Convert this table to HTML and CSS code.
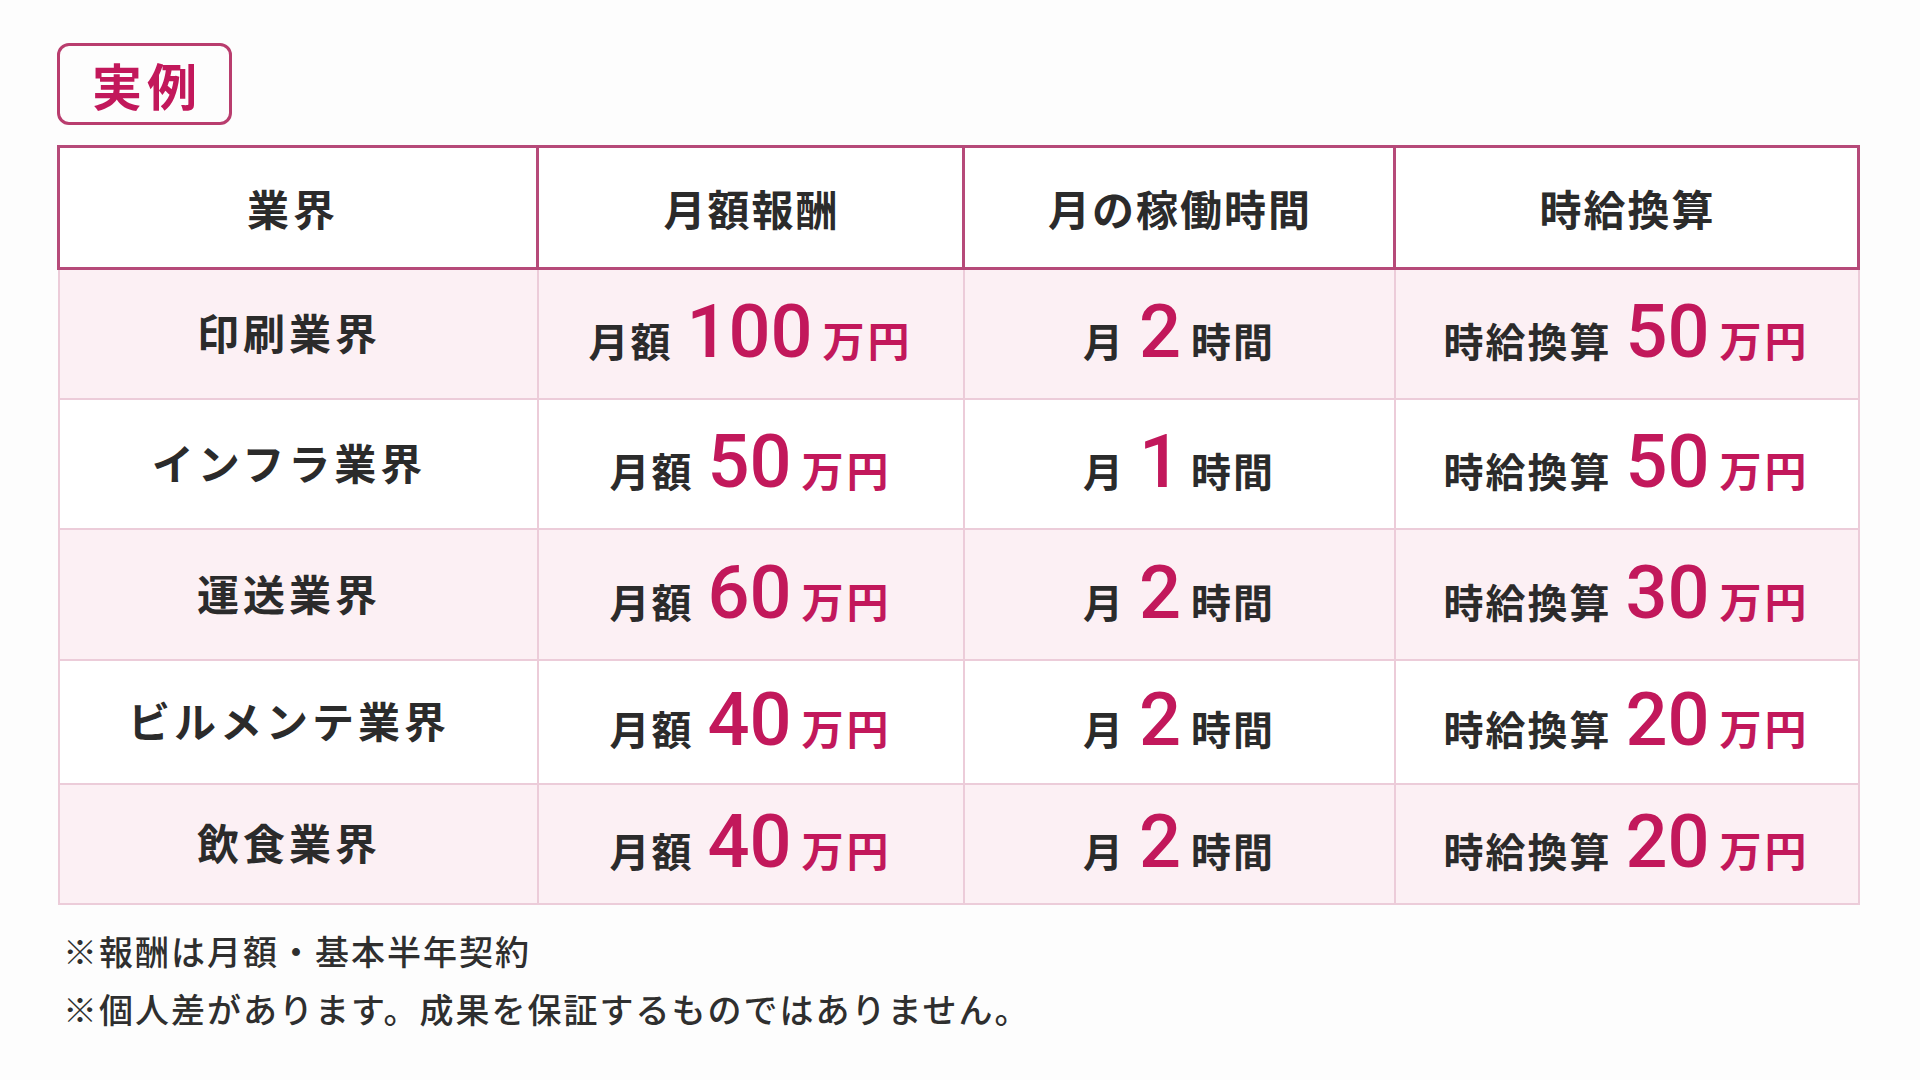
FILE: index.html
```html
<!DOCTYPE html>
<html lang="ja">
<head>
<meta charset="utf-8">
<title>実例</title>
<link rel="stylesheet" href="styles.css">
</head>
<body>
<div class="page">
  <div class="badge">実例</div>
  <table class="cases">
    <colgroup>
      <col class="c1"><col class="c2"><col class="c3"><col class="c4">
    </colgroup>
    <thead>
      <tr>
        <th class="ind">業界</th>
        <th>月額報酬</th>
        <th>月の稼働時間</th>
        <th>時給換算</th>
      </tr>
    </thead>
    <tbody>
      <tr class="pink">
        <td class="ind">印刷業界</td>
        <td><span class="lbl">月額</span><span class="num">100</span><span class="unit">万円</span></td>
        <td><span class="lbl">月</span><span class="num">2</span><span class="lbl">時間</span></td>
        <td><span class="lbl">時給換算</span><span class="num">50</span><span class="unit">万円</span></td>
      </tr>
      <tr>
        <td class="ind">インフラ業界</td>
        <td><span class="lbl">月額</span><span class="num">50</span><span class="unit">万円</span></td>
        <td><span class="lbl">月</span><span class="num">1</span><span class="lbl">時間</span></td>
        <td><span class="lbl">時給換算</span><span class="num">50</span><span class="unit">万円</span></td>
      </tr>
      <tr class="pink">
        <td class="ind">運送業界</td>
        <td><span class="lbl">月額</span><span class="num">60</span><span class="unit">万円</span></td>
        <td><span class="lbl">月</span><span class="num">2</span><span class="lbl">時間</span></td>
        <td><span class="lbl">時給換算</span><span class="num">30</span><span class="unit">万円</span></td>
      </tr>
      <tr>
        <td class="ind">ビルメンテ業界</td>
        <td><span class="lbl">月額</span><span class="num">40</span><span class="unit">万円</span></td>
        <td><span class="lbl">月</span><span class="num">2</span><span class="lbl">時間</span></td>
        <td><span class="lbl">時給換算</span><span class="num">20</span><span class="unit">万円</span></td>
      </tr>
      <tr class="pink">
        <td class="ind">飲食業界</td>
        <td><span class="lbl">月額</span><span class="num">40</span><span class="unit">万円</span></td>
        <td><span class="lbl">月</span><span class="num">2</span><span class="lbl">時間</span></td>
        <td><span class="lbl">時給換算</span><span class="num">20</span><span class="unit">万円</span></td>
      </tr>
    </tbody>
  </table>
  <div class="notes">
    <p>※報酬は月額・基本半年契約</p>
    <p>※個人差があります。成果を保証するものではありません。</p>
  </div>
</div>
</body>
</html>
```

FILE: styles.css
```css
html, body {
  margin: 0;
  padding: 0;
  background: #fdfdfd;
}

body {
  font-family: "Noto Sans CJK JP", "Noto Sans", sans-serif;
  color: #2b2b2b;
}

.page {
  width: 1920px;
  height: 1080px;
  box-sizing: border-box;
  padding: 43px 60px 0 57px;
  display: flex;
  flex-direction: column;
  align-items: flex-start;
}

.badge {
  box-sizing: border-box;
  width: 175px;
  height: 82px;
  border: 3px solid #b93d6e;
  border-radius: 12px;
  display: flex;
  align-items: center;
  justify-content: center;
  color: #c2185b;
  font-size: 50px;
  font-weight: 700;
  letter-spacing: 5px;
  text-indent: 5px;
  line-height: 1;
}

.cases {
  margin-top: 20px;
  width: 1800px;
  table-layout: fixed;
  border-collapse: collapse;
}

.c1 { width: 479px; }
.c2 { width: 426px; }
.c3 { width: 431px; }
.c4 { width: 464px; }

.cases th {
  height: 119px;
  border: 3px solid #b64a79;
  background: #ffffff;
  font-size: 42px;
  font-weight: 700;
  letter-spacing: 2px;
  text-indent: 2px;
  line-height: 1;
  text-align: center;
  vertical-align: middle;
  padding: 0;
}

.cases th.ind {
  letter-spacing: 4px;
  text-indent: 4px;
  padding-right: 14px;
}

.cases td {
  border: 2px solid #ecccd9;
  background: #ffffff;
  text-align: center;
  vertical-align: middle;
  padding: 0 0 4px;
  line-height: 1;
  white-space: nowrap;
}

.cases tr.pink td {
  background: #fcf0f4;
}

.cases tbody tr:nth-child(1) td { height: 124px; }
.cases tbody tr:nth-child(2) td { height: 124px; }
.cases tbody tr:nth-child(3) td { height: 125px; }
.cases tbody tr:nth-child(4) td { height: 118px; }
.cases tbody tr:nth-child(5) td { height: 114px; }

.cases td.ind {
  font-size: 42px;
  font-weight: 700;
  letter-spacing: 4px;
  text-indent: 4px;
  padding-right: 22px;
}

.lbl {
  font-size: 40px;
  font-weight: 700;
  letter-spacing: 2px;
}

.num {
  font-family: Roboto, "Noto Sans", sans-serif;
  font-size: 74px;
  font-weight: 500;
  color: #c2185b;
  margin: 0 10px 0 14px;
  letter-spacing: 0;
}

.unit {
  font-size: 42px;
  font-weight: 700;
  color: #c2185b;
  letter-spacing: 3px;
}

.notes {
  margin-top: 17px;
  padding-left: 6px;
}

.notes p {
  margin: 0;
  font-size: 34px;
  font-weight: 500;
  line-height: 58px;
  letter-spacing: 2px;
  color: #2f2f2f;
}
```
